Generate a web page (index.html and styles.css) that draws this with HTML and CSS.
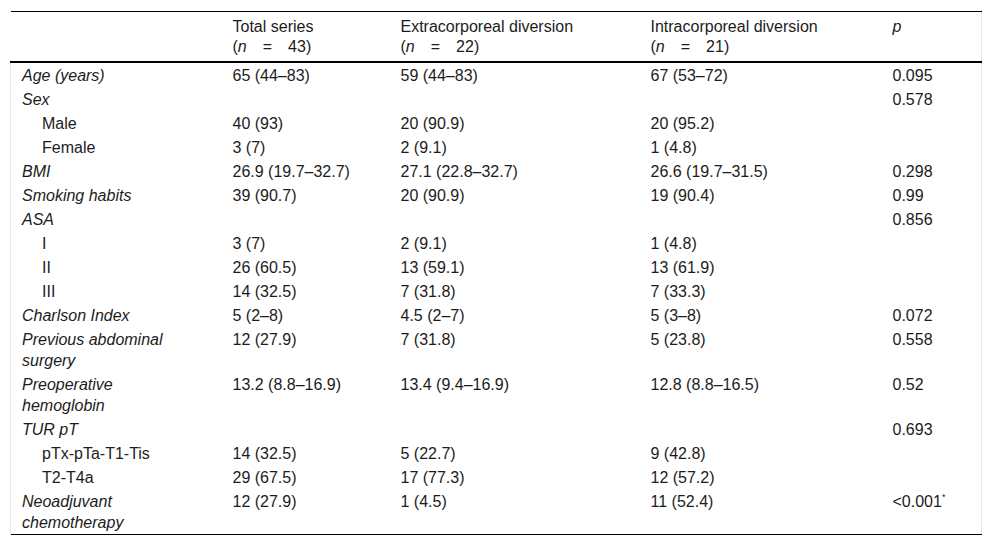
FILE: index.html
```html
<!DOCTYPE html>
<html lang="en">
<head>
<meta charset="utf-8">
<title>Table</title>
<link rel="stylesheet" href="styles.css">
</head>
<body>
<div class="wrap">
<table class="tbl">
<colgroup>
<col class="c1"><col class="c2"><col class="c3"><col class="c4"><col class="c5">
</colgroup>
<thead>
<tr>
<th></th>
<th>Total series<br>(<i>n</i>&emsp;=&emsp;43)</th>
<th>Extracorporeal diversion<br>(<i>n</i>&emsp;=&emsp;22)</th>
<th>Intracorporeal diversion<br>(<i>n</i>&emsp;=&emsp;21)</th>
<th><i>p</i></th>
</tr>
</thead>
<tbody>
<tr><td class="lab">Age (years)</td><td>65 (44–83)</td><td>59 (44–83)</td><td>67 (53–72)</td><td>0.095</td></tr>
<tr><td class="lab">Sex</td><td></td><td></td><td></td><td>0.578</td></tr>
<tr><td class="sub">Male</td><td>40 (93)</td><td>20 (90.9)</td><td>20 (95.2)</td><td></td></tr>
<tr><td class="sub">Female</td><td>3 (7)</td><td>2 (9.1)</td><td>1 (4.8)</td><td></td></tr>
<tr><td class="lab">BMI</td><td>26.9 (19.7–32.7)</td><td>27.1 (22.8–32.7)</td><td>26.6 (19.7–31.5)</td><td>0.298</td></tr>
<tr><td class="lab">Smoking habits</td><td>39 (90.7)</td><td>20 (90.9)</td><td>19 (90.4)</td><td>0.99</td></tr>
<tr><td class="lab">ASA</td><td></td><td></td><td></td><td>0.856</td></tr>
<tr><td class="sub">I</td><td>3 (7)</td><td>2 (9.1)</td><td>1 (4.8)</td><td></td></tr>
<tr><td class="sub">II</td><td>26 (60.5)</td><td>13 (59.1)</td><td>13 (61.9)</td><td></td></tr>
<tr><td class="sub">III</td><td>14 (32.5)</td><td>7 (31.8)</td><td>7 (33.3)</td><td></td></tr>
<tr><td class="lab">Charlson Index</td><td>5 (2–8)</td><td>4.5 (2–7)</td><td>5 (3–8)</td><td>0.072</td></tr>
<tr><td class="lab">Previous abdominal surgery</td><td>12 (27.9)</td><td>7 (31.8)</td><td>5 (23.8)</td><td>0.558</td></tr>
<tr><td class="lab">Preoperative hemoglobin</td><td>13.2 (8.8–16.9)</td><td>13.4 (9.4–16.9)</td><td>12.8 (8.8–16.5)</td><td>0.52</td></tr>
<tr><td class="lab">TUR pT</td><td></td><td></td><td></td><td>0.693</td></tr>
<tr><td class="sub">pTx-pTa-T1-Tis</td><td>14 (32.5)</td><td>5 (22.7)</td><td>9 (42.8)</td><td></td></tr>
<tr><td class="sub">T2-T4a</td><td>29 (67.5)</td><td>17 (77.3)</td><td>12 (57.2)</td><td></td></tr>
<tr><td class="lab">Neoadjuvant chemotherapy</td><td>12 (27.9)</td><td>1 (4.5)</td><td>11 (52.4)</td><td>&lt;0.001<sup>*</sup></td></tr>
</tbody>
</table>
</div>
</body>
</html>
```
FILE: styles.css
```css
html, body {
  margin: 0;
  padding: 0;
  background: #fff;
}
body {
  font-family: "Liberation Sans", Arial, sans-serif;
  font-size: 16px;
  color: #1c1c1c;
}
.wrap {
  margin: 10px 0 0 10px;
  width: 971px;
  padding-top: 1px;
  border-right: 1px solid #e6e6e6;
}
.tbl {
  width: 971px;
  table-layout: fixed;
  border-collapse: collapse;
  border-top: 1px solid #000;
  border-bottom: 1px solid #000;
}
.c1 { width: 210px; }
.c2 { width: 168px; }
.c3 { width: 250px; }
.c4 { width: 242px; }
.c5 { width: 101px; }
.tbl th {
  font-weight: normal;
  text-align: left;
  vertical-align: top;
  line-height: 20px;
  padding: 5px 12px 4px;
  border-bottom: 2px solid #000;
}
.tbl td {
  text-align: left;
  vertical-align: top;
  line-height: 21px;
  padding: 2px 12px 1px;
}
.tbl tbody td:first-child {
  border-left: 1px solid #e6e6e6;
  padding-left: 11px;
  padding-right: 36px;
}
.tbl tbody td.lab {
  font-style: italic;
}
.tbl tbody td.sub {
  padding-left: 31px;
}
.tbl sup {
  font-size: 9px;
  line-height: 0;
  vertical-align: 7px;
}
```
